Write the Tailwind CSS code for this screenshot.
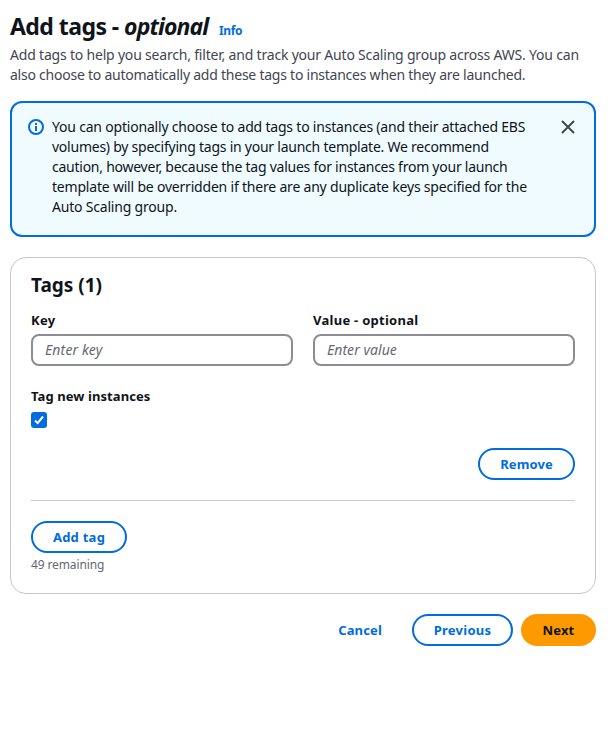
<!DOCTYPE html>
<html lang="en"><head><meta charset="utf-8"><title>Add tags</title>
<script src="https://cdn.jsdelivr.net/npm/@tailwindcss/browser@4"></script></head>
<body class="bg-white font-['Noto_Sans','Open_Sans',sans-serif] text-sm leading-5 text-[#0f141a]">
<main class="flex w-[612px] flex-col pl-[10px] pr-4 pt-[11px]">
<header>
<h1 class="flex items-baseline whitespace-nowrap text-[23px] leading-[30px] font-bold"><span class="w-[209px] tracking-[-0.55px]">Add tags - <em class="tracking-[-0.9px]">optional</em></span><a class="text-xs font-bold tracking-[-0.4px] text-[#006ce0]">Info</a></h1>
<p class="mt-1 whitespace-nowrap tracking-[-0.24px] text-[#424650]"><span class="tracking-[-0.195px]">Add tags to help you search, filter, and track your Auto Scaling group across AWS. You can</span><br>also choose to automatically add these tags to instances when they are launched.</p>
</header>
<section class="mt-4 flex h-[136px] items-start rounded-xl border-2 border-[#006ce0] bg-[#f0fbff] px-4 pt-[14px]">
<svg class="mt-0.5 mr-2 size-4 shrink-0" viewBox="0 0 16 16" fill="none" stroke="#006ce0" stroke-width="2"><circle cx="8" cy="8" r="7"/><path d="M8 7v5M8 4v2"/></svg>
<p class="grow whitespace-nowrap tracking-[-0.2px]">You can optionally choose to add tags to instances (and their attached EBS<br><span class="tracking-[-0.24px]">volumes) by specifying tags in your launch template. We recommend</span><br><span class="tracking-[-0.25px]">caution, however, because the tag values for instances from your launch</span><br>template will be overridden if there are any duplicate keys specified for the<br>Auto Scaling group.</p>
<svg class="mt-0.5 mr-0.5 size-4 shrink-0" viewBox="0 0 16 16" fill="none" stroke="#424650" stroke-width="2"><path d="m2 2 12 12M14 2 2 14"/></svg>
</section>
<section class="mt-5 flex h-[337px] flex-col rounded-2xl border border-[#c6c6cd] px-5 pt-4">
<h2 class="text-[19px] leading-[22px] font-bold">Tags (1)</h2>
<div class="mt-[14px] grid grid-cols-2 gap-5 text-[13px] font-bold tracking-[0.27px]">
<label>Key<input class="mt-1 block h-8 w-full rounded-lg border-2 border-[#8c8c94] px-3 pb-px text-sm font-normal tracking-[0.15px] italic placeholder:text-[#656871]" placeholder="Enter key"></label>
<label>Value - optional<input class="mt-1 block h-8 w-full rounded-lg border-2 border-[#8c8c94] px-3 pb-px text-sm font-normal tracking-[0.05px] italic placeholder:text-[#656871]" placeholder="Enter value"></label>
</div>
<div class="mt-5 text-[13px] font-bold tracking-[0.08px]">Tag new instances</div>
<svg class="mt-1.5 size-4" viewBox="0 0 16 16" fill="none"><rect width="16" height="16" rx="3" fill="#006ce0"/><path d="m4 8.500 2.700 2.600L12 4.500" stroke="white" stroke-width="2"/></svg>
<button class="mt-5 h-8 w-[97px] self-end rounded-full border-2 border-[#006ce0] text-[13px] font-bold tracking-[0.1px] text-[#006ce0]">Remove</button>
<hr class="mt-5 border-[#c6c6cd]">
<button class="mt-5 h-8 w-24 shrink-0 rounded-full border-2 border-[#006ce0] text-[13px] font-bold tracking-[0.25px] text-[#006ce0]">Add tag</button>
<p class="mt-1 text-xs leading-4 tracking-[-0.12px] text-[#656871]">49 remaining</p>
</section>
<footer class="mt-5 flex justify-end text-[13px] font-bold tracking-[0.15px] text-[#006ce0]">
<button class="mr-[30px]">Cancel</button>
<button class="mr-2 h-8 w-[101px] rounded-full border-2 border-[#006ce0] tracking-[0.25px]">Previous</button>
<button class="h-8 w-[75px] rounded-full bg-[#ff9900] text-[#0f141a]">Next</button>
</footer>
</main></body></html>
